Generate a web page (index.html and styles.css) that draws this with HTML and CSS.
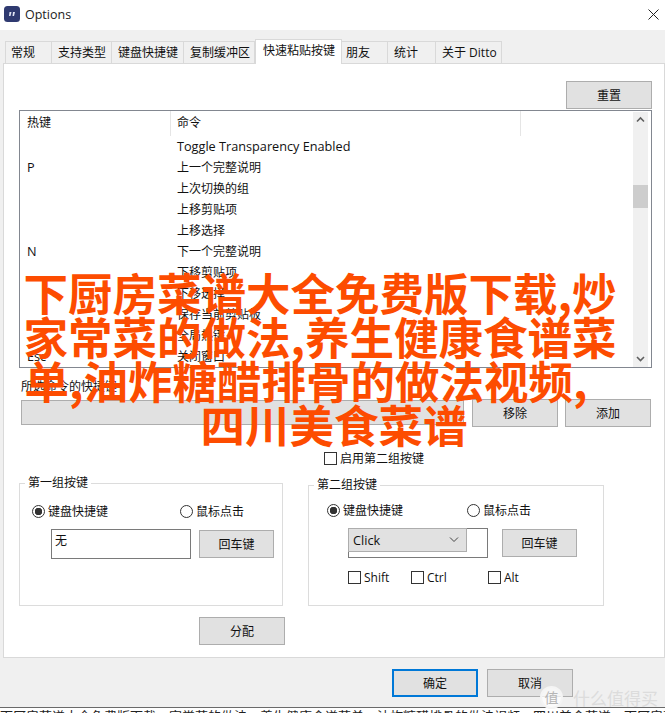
FILE: index.html
```html
<!DOCTYPE html>
<html lang="zh-CN">
<head>
    <meta charset="UTF-8">
    <title>Options</title>
    <link rel="stylesheet" href="styles.css">
</head>
<body>
    <div class="window">
        <div class="titlebar">
            <div class="app-icon">
                <svg width="16" height="16" viewBox="0 0 16 16"><rect width="16" height="16" rx="3.5" fill="#2f3a70"/><path d="M5.500 6h2l-1 4H5zM9 6h2l-1 4H8.500z" fill="#dfe3f2"/></svg>
            </div>
            <span class="title">Options</span>
            <svg class="close" width="11" height="11" viewBox="0 0 11 11"><path d="M.5.500l10 10M10.500.500l-10 10" stroke="#222" fill="none"/></svg>
        </div>

        <div class="tabs">
            <div class="tab w47">常规</div>
            <div class="tab w60">支持类型</div>
            <div class="tab w72">键盘快捷键</div>
            <div class="tab w71">复制缓冲区</div>
            <div class="tab active">快速粘贴按键</div>
            <div class="tab w46">朋友</div>
            <div class="tab w48">统计</div>
            <div class="tab w66">关于 Ditto</div>
        </div>

        <div class="panel">
            <div class="reset-row">
                <button class="btn">重置</button>
            </div>

            <div class="list">
                <div class="list-main">
                    <div class="list-head">
                        <div class="col-key">热键</div>
                        <div class="col-cmd">命令</div>
                    </div>
                    <div class="row"><div class="col-key"></div><div class="col-cmd latin">Toggle Transparency Enabled</div></div>
                    <div class="row"><div class="col-key latin">P</div><div class="col-cmd">上一个完整说明</div></div>
                    <div class="row"><div class="col-key"></div><div class="col-cmd">上次切换的组</div></div>
                    <div class="row"><div class="col-key"></div><div class="col-cmd">上移剪贴项</div></div>
                    <div class="row"><div class="col-key"></div><div class="col-cmd">上移选择</div></div>
                    <div class="row"><div class="col-key latin">N</div><div class="col-cmd">下一个完整说明</div></div>
                    <div class="row"><div class="col-key"></div><div class="col-cmd">下移剪贴项</div></div>
                    <div class="row"><div class="col-key"></div><div class="col-cmd">下移选择</div></div>
                    <div class="row"><div class="col-key"></div><div class="col-cmd">保存当前剪贴板</div></div>
                    <div class="row"><div class="col-key"></div><div class="col-cmd">全局热键</div></div>
                    <div class="row"><div class="col-key latin">Esc</div><div class="col-cmd">关闭窗口</div></div>
                </div>
                <div class="scrollbar">
                    <svg width="15" height="15" viewBox="0 0 15 15"><path d="M4 9.500l3.500-3.500 3.500 3.500" stroke="#606060" stroke-width="1.600" fill="none"/></svg>
                    <div class="thumb"></div>
                    <svg class="arrow-down" width="15" height="15" viewBox="0 0 15 15"><path d="M4 6l3.500 3.500L11 6" stroke="#606060" stroke-width="1.600" fill="none"/></svg>
                </div>
            </div>

            <div class="field-label">所选命令的快捷键</div>
            <div class="shortcut-row">
                <div class="shortcut-field"></div>
                <button class="btn">移除</button>
                <button class="btn">添加</button>
            </div>

            <label class="enable-second">
                <span class="check"></span>启用第二组按键
            </label>

            <div class="groups">
                <fieldset class="group group-one">
                    <legend>第一组按键</legend>
                    <div class="radios">
                        <span class="radio-item first"><span class="radio on"></span>键盘快捷键</span>
                        <span class="radio-item"><span class="radio"></span>鼠标点击</span>
                    </div>
                    <div class="key-row">
                        <div class="key-input">无</div>
                        <button class="btn enter">回车键</button>
                    </div>
                </fieldset>

                <fieldset class="group group-two">
                    <legend>第二组按键</legend>
                    <div class="radios">
                        <span class="radio-item first"><span class="radio on"></span>键盘快捷键</span>
                        <span class="radio-item"><span class="radio"></span>鼠标点击</span>
                    </div>
                    <div class="key-row">
                        <div class="key-input combo-box">
                            <div class="combo">
                                <span class="latin">Click</span>
                                <svg width="10" height="6" viewBox="0 0 10 6"><path d="M1 .500l4 4 4-4" stroke="#444" fill="none"/></svg>
                            </div>
                        </div>
                        <button class="btn enter">回车键</button>
                    </div>
                    <div class="mods">
                        <span class="mod shift"><span class="check"></span>Shift</span>
                        <span class="mod ctrl"><span class="check"></span>Ctrl</span>
                        <span class="mod"><span class="check"></span>Alt</span>
                    </div>
                </fieldset>
            </div>

            <button class="btn assign">分配</button>
        </div>

        <div class="footer">
            <button class="btn ok">确定</button>
            <button class="btn">取消</button>
        </div>

        <div class="page-strip">下厨房菜谱大全免费版下载，家常菜的做法，养生健康食谱菜单，油炸糖醋排骨的做法视频，四川美食菜谱，下厨房菜谱大全免费版下载</div>
    </div>

    <h1 class="headline">
        <span class="line">下厨房菜谱大全免费版下载,炒</span>
        <span class="line">家常菜的做法,养生健康食谱菜</span>
        <span class="line third">单,油炸糖醋排骨的做法视频,</span>
        <span class="line fourth">四川美食菜谱</span>
    </h1>

    <div class="watermark">
        <span class="wm-badge">值</span>
        <span class="wm-text">什么值得买</span>
    </div>
</body>
</html>
```

FILE: styles.css
```css
* {
    box-sizing: border-box;
}

body {
    margin: 0;
    width: 665px;
    height: 713px;
    overflow: hidden;
    position: relative;
    font-family: "Open Sans", "Noto Sans CJK SC", sans-serif;
    font-size: 12px;
    color: #111;
    background: #f0f0f0;
}

.latin {
    font-family: "Open Sans", sans-serif;
    font-size: 12.7px;
}

.titlebar {
    height: 30px;
    background: #fff;
    display: flex;
    align-items: center;
    padding: 0 6px 2px 4px;
}

.app-icon {
    height: 16px;
    margin-right: 5px;
}

.title {
    font-size: 12.500px;
    color: #222;
}

.close {
    margin-left: auto;
}

.tabs {
    display: flex;
    align-items: flex-end;
    height: 33px;
    padding-left: 5px;
}

.tab {
    height: 22px;
    line-height: 21px;
    padding-left: 6px;
    white-space: nowrap;
    background: #f0f0f0;
    border: 1px solid #d9d9d9;
    border-bottom: none;
    border-left: none;
}

.tab:first-child {
    border-left: 1px solid #d9d9d9;
    padding-left: 5px;
}

.w47 { width: 47px; }
.w60 { width: 60px; }
.w72 { width: 72px; }
.w71 { width: 71px; }
.w46 { width: 46px; padding-left: 4px; }
.w48 { width: 48px; }
.w66 { width: 66px; }

.tab.active {
    width: 87px;
    height: 25px;
    line-height: 22px;
    padding-left: 7px;
    background: #fff;
    border-left: 1px solid #d9d9d9;
    margin-bottom: -1px;
    z-index: 1;
}

.panel {
    margin-left: 3px;
    width: 662px;
    height: 595px;
    background: #fff;
    border: 1px solid #d9d9d9;
    padding: 17px 12px 0 15px;
}

.btn {
    width: 86px;
    height: 28px;
    padding: 0;
    font: inherit;
    color: #111;
    background: #e1e1e1;
    border: 1px solid #adadad;
}

.reset-row {
    display: flex;
    justify-content: flex-end;
    margin-bottom: 1px;
}

.list {
    display: flex;
    height: 258px;
    border: 1px solid #828790;
    overflow: hidden;
}

.list-main {
    flex: 1;
}

.list-head {
    display: flex;
    height: 25px;
    line-height: 24px;
}

.list-head .col-key {
    border-right: 1px solid #e5e5e5;
}

.list-head .col-cmd {
    width: 350px;
    border-right: 1px solid #e5e5e5;
}

.row {
    display: flex;
    height: 21px;
    line-height: 21px;
}

.col-key {
    width: 151px;
    padding-left: 7px;
}

.col-cmd {
    padding-left: 6px;
}

.scrollbar {
    width: 15px;
    margin: 1px 3px 0 0;
    background: #f0f0f0;
    display: flex;
    flex-direction: column;
}

.thumb {
    height: 23px;
    margin-top: 58px;
    background: #cdcdcd;
}

.arrow-down {
    margin-top: auto;
    margin-bottom: 1px;
}

.field-label {
    margin: 11px 0 0 2px;
    height: 16px;
    line-height: 16px;
}

.shortcut-row {
    display: flex;
    height: 28px;
    margin-top: 4px;
}

.shortcut-field {
    width: 443px;
    height: 25px;
    margin: 1px 8px 0 2px;
    background: #e1e1e1;
    border: 1px solid #adadad;
}

.shortcut-row .btn + .btn {
    margin-left: 7px;
}

.enable-second {
    display: flex;
    align-items: center;
    height: 14px;
    margin: 24px 0 0 305px;
}

.check {
    display: inline-block;
    width: 13px;
    height: 13px;
    margin-right: 3px;
    background: #fff;
    border: 1px solid #333;
}

.groups {
    display: flex;
    align-items: flex-end;
    height: 131px;
    margin-top: 10px;
}

.group {
    margin: 0;
    padding: 0;
    border: 1px solid #dcdcdc;
    min-width: 0;
}

.group legend {
    padding: 0 3px;
    margin-left: 5px;
    line-height: 16px;
}

.group-one {
    width: 264px;
    height: 131px;
    margin-right: 25px;
}

.group-two {
    width: 296px;
    height: 129px;
}

.radios {
    display: flex;
    height: 16px;
    align-items: center;
}

.group-one .radios {
    margin: 12px 0 0 12px;
}

.group-two .radios {
    margin: 9px 0 0 18px;
}

.radio-item {
    display: flex;
    align-items: center;
}

.group-one .radio-item.first {
    width: 148px;
}

.group-two .radio-item.first {
    width: 140px;
}

.radio {
    width: 13px;
    height: 13px;
    margin-right: 3px;
    border: 1px solid #333;
    border-radius: 50%;
    background: #fff;
}

.radio.on {
    background: radial-gradient(circle, #333 0 3.500px, #fff 4px);
}

.key-row {
    display: flex;
    align-items: flex-start;
}

.group-one .key-row {
    margin: 10px 0 0 31px;
}

.group-two .key-row {
    margin: 10px 0 0 39px;
}

.key-input {
    width: 140px;
    height: 30px;
    padding: 1px 3px;
    line-height: 20px;
    border: 1px solid #7a7a7a;
    background: #fff;
}

.combo-box {
    padding: 0;
    border-left: 1px solid #7a7a7a;
}

.combo {
    display: flex;
    align-items: center;
    justify-content: space-between;
    width: 119px;
    height: 24px;
    margin: -1px 0 0 -1px;
    padding: 0 7px 0 4px;
    background: #e1e1e1;
    border: 1px solid #adadad;
}

.enter {
    width: 75px;
    margin-left: 8px;
}

.group-one .enter {
    margin-top: 1px;
}

.group-two .enter {
    margin-left: 14px;
    margin-top: 1px;
}

.mods {
    display: flex;
    align-items: center;
    height: 14px;
    margin: 12px 0 0 39px;
}

.mod {
    display: flex;
    align-items: center;
    font-family: "Open Sans", sans-serif;
}

.mod.shift {
    width: 63px;
}

.mod.ctrl {
    width: 77px;
}

.assign {
    display: block;
    margin: 11px 0 0 180px;
}

.footer {
    display: flex;
    gap: 9px;
    height: 49px;
    padding: 11px 0 0 392px;
}

.ok {
    border: 2px solid #0078d7;
}

.page-strip {
    height: 6px;
    overflow: hidden;
    white-space: nowrap;
    background: #fff;
    border-top: 1px solid #6a6a6a;
    padding-top: 1px;
    font-size: 13px;
    line-height: 14px;
    color: #222;
}

.headline {
    position: absolute;
    left: 0;
    top: 270px;
    width: 640px;
    margin: 0;
    font-family: "Noto Sans CJK SC", sans-serif;
    font-size: 44.500px;
    line-height: 44px;
    font-weight: 700;
    text-align: center;
    white-space: nowrap;
    color: #fd4c00;
}

.line {
    display: block;
}

.line.third {
    padding-right: 28px;
}

.line.fourth {
    padding-left: 28px;
}

.watermark {
    position: absolute;
    left: 540px;
    top: 685px;
    display: flex;
    align-items: center;
}

.wm-badge {
    width: 23px;
    height: 23px;
    line-height: 19px;
    text-align: center;
    border: 2px solid #f4f4f4;
    border-radius: 50%;
    background: rgba(255, 255, 255, 0.7);
    color: #b5b5b5;
    font-size: 14px;
}

.wm-text {
    margin-left: 10px;
    font-size: 17px;
    color: #dcdcdc;
}
```
